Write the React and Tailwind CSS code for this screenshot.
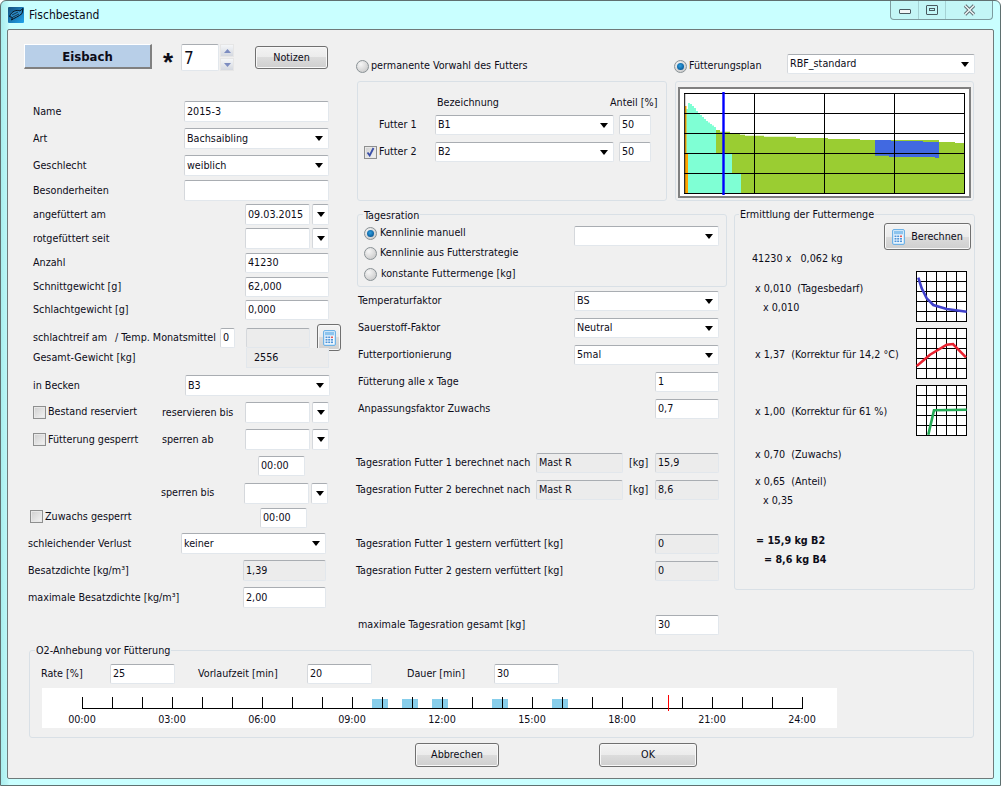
import React from "react";

const Tri = () => (
  <svg width="8" height="5" viewBox="0 0 8 5" className="shrink-0"><path d="M0 0h8L4 5z" fill="#000" /></svg>
);

const fieldCls = "border border-[#e2e7ec] border-t-[#a9adb2] border-l-[#d5d8dc] rounded-[2px] flex items-center pl-[2px] overflow-hidden whitespace-nowrap shrink-0";

const Input = ({ className = "", children }) => (
  <div className={`${fieldCls} bg-white ${className}`}>{children}</div>
);
const Ro = ({ className = "", children }) => (
  <div className={`${fieldCls} bg-[#ececec] ${className}`}>{children}</div>
);
const Select = ({ className = "", children }) => (
  <div className={`${fieldCls} bg-white justify-between pr-[5px] ${className}`}>
    <span>{children}</span>
    <Tri />
  </div>
);
const DateBox = ({ children }) => (
  <div className="flex gap-[2px] shrink-0">
    <Input className="w-[65px] h-[21px]">{children}</Input>
    <div className={`${fieldCls} bg-white w-[17px] h-[21px] justify-center !pl-0`}><Tri /></div>
  </div>
);

const Radio = ({ on }) => (
  <span className="relative w-[13px] h-[13px] rounded-full border border-[#8a9296] bg-[radial-gradient(circle_at_35%_30%,#f6f6f6,#c2c2c2)] shrink-0 flex items-center justify-center">
    {on && <span className="w-[7px] h-[7px] rounded-full bg-[radial-gradient(circle_at_45%_40%,#2f9fe0,#0a5a98_75%,#07406f)]" />}
  </span>
);

const Check = ({ on }) => (
  <span className="w-[13px] h-[13px] border border-[#8e8f8f] bg-[linear-gradient(135deg,#cfcfcf,#f4f4f4)] shadow-[inset_0_0_0_1px_#e8e8e8] shrink-0 flex items-center justify-center">
    {on && (
      <svg width="9" height="10" viewBox="0 0 9 10"><path d="M1.5 5.5 L3.7 8.5 L7.5 1" fill="none" stroke="#3a4fa8" strokeWidth="1.8" /></svg>
    )}
  </span>
);

const winBtn = "rounded-[3px] border border-[#707070] bg-[linear-gradient(#f3f3f3_0%,#ebebeb_50%,#dcdcdc_50%,#cfcfcf_100%)] shadow-[inset_0_0_0_1px_#f8f8f8] flex items-center justify-center shrink-0";

const Calc = () => (
  <svg width="13" height="16" viewBox="0 0 13 16" className="shrink-0">
    <rect x="0.5" y="0.5" width="12" height="15" rx="1.5" fill="#cfe6f8" stroke="#6fb2e6" />
    <rect x="2" y="2" width="9" height="3" fill="#8cc4ee" />
    <rect x="2" y="6" width="9" height="8" fill="#f4faff" />
    {[6.5, 9, 11.5].map((y) =>
      [2.5, 5.2, 8].map((x) => (
        <rect key={`${x}-${y}`} x={x} y={y} width="2" height="1.6" fill={x > 7 && y < 7 ? "#e05a5a" : "#4f94d8"} />
      ))
    )}
  </svg>
);

const Group = ({ className = "", title, titleCls = "", children }) => (
  <div className={`relative border border-[#d9e0e6] rounded-[3px] shrink-0 ${className}`}>
    {title && (
      <span className={`absolute bg-[#f0f0f0] px-[1px] leading-[14px] ${titleCls}`}>{title}</span>
    )}
    {children}
  </div>
);

const Row = ({ className = "", children }) => (
  <div className={`flex items-center whitespace-nowrap ${className}`}>{children}</div>
);

const MiniChart = ({ points, color }) => (
  <svg width="51" height="51" viewBox="0 0 51 51" className="block bg-white">
    {[0.5, 10.5, 20.5, 30.5, 40.5, 50.5].map((p) => (
      <g key={p}>
        <line x1={p} y1="0" x2={p} y2="51" stroke="#000" strokeWidth="1" />
        <line x1="0" y1={p} x2="51" y2={p} stroke="#000" strokeWidth="1" />
      </g>
    ))}
    <polyline points={points} fill="none" stroke={color} strokeWidth="2.6" />
  </svg>
);

const aquaTop = [
  [688, 103], [690, 104], [692, 106], [694, 108], [696, 111], [698, 113], [700, 115], [702, 117], [704, 119],
  [706, 121], [708, 122.5], [710, 124], [712, 125.5], [714, 127],
];
const aquaPath =
  "M686 193 V109 H688 " +
  aquaTop.map(([x, y], i) => `V${y} H${i < aquaTop.length - 1 ? aquaTop[i + 1][0] : 716}`).join(" ") +
  " V153 H732 V173 H741 V193 Z";

const MainChart = () => (
  <svg width="289" height="107" viewBox="680 89 289 107" className="block">
    <path d="M716 193 V130 H720 V131.7 H730 V133 H740 V134.7 H745 V135.7 H764 V136.7 H796 V138 H828 V139 H860 V140 H939 V142 H955 V143 H965 V193 Z" fill="#9acd32" />
    <path d={aquaPath} fill="#7fffd4" />
    <path d="M685 193 V106 H686.5 V154 H688 V193 Z" fill="#ffa500" />
    <path d="M875 140 H891 V141 H923 V142 H939 V158 H935 V157 H889 V155.7 H875 Z" fill="#4169e1" />
    {[684.7, 754.5, 824.5, 894.5, 964.5].map((x) => (
      <line key={x} x1={x} y1="93" x2={x} y2="194" stroke="#000" strokeWidth="1" />
    ))}
    {[93.5, 113.5, 133.5, 153.5, 173.5, 193.5].map((y) => (
      <line key={y} x1="684" y1={y} x2="965" y2={y} stroke="#000" strokeWidth="1" />
    ))}
    <line x1="723.5" y1="92" x2="723.5" y2="195" stroke="#0000ff" strokeWidth="2.4" />
  </svg>
);

const Timeline = () => {
  const ticks = Array.from({ length: 25 }, (_, i) => 40.5 + i * 30);
  return (
    <div className="w-[795px] h-[40px] bg-white ml-[12px] mt-[4px] overflow-hidden">
      <svg width="795" height="25" viewBox="0 0 795 25" className="block">
        {[330, 360, 390, 450, 510].map((x) => (
          <rect key={x} x={x} y="11" width="16" height="9" fill="#87ceeb" />
        ))}
        <line x1="40" y1="20.5" x2="761" y2="20.5" stroke="#000" />
        {ticks.map((x) => (
          <line key={x} x1={x} y1="9" x2={x} y2="20" stroke="#000" />
        ))}
        <line x1="626.5" y1="7" x2="626.5" y2="23" stroke="#ff0000" />
      </svg>
      <div className="flex -ml-[5px]">
        {["00:00", "03:00", "06:00", "09:00", "12:00", "15:00", "18:00", "21:00", "24:00"].map((t) => (
          <span key={t} className="w-[90px] text-center leading-[14px] shrink-0">{t}</span>
        ))}
      </div>
    </div>
  );
};

const LeftColumn = () => (
  <div className="w-[332px] shrink-0 pt-[14px]">
    <div className="flex items-start">
      <div className="w-[128px] h-[25px] pt-[1px] bg-[#b8cfe8] border border-[#ffffff] border-r-[#808080] border-b-[#808080] border-r-2 border-b-2 flex items-center justify-center font-bold text-[13px] shrink-0">Eisbach</div>
      <span className="w-[29px] pl-[11px] h-[27px] text-[26px] leading-[36px] font-bold font-['Liberation_Sans',sans-serif] shrink-0">*</span>
      <Input className="w-[38px] h-[27px] text-[17px]">7</Input>
      <div className="ml-[1px] w-[14px] flex flex-col gap-[1px] shrink-0">
        <div className="h-[13px] bg-[linear-gradient(#f4f6f8,#d4d8e0)] border border-[#e6e6e6] flex items-center justify-center">
          <svg width="7" height="4" viewBox="0 0 7 4"><path d="M0 4h7L3.5 0z" fill="#7c8cc0" /></svg>
        </div>
        <div className="h-[13px] bg-[linear-gradient(#f4f6f8,#d4d8e0)] border border-[#e6e6e6] flex items-center justify-center">
          <svg width="7" height="4" viewBox="0 0 7 4"><path d="M0 0h7L3.5 4z" fill="#7c8cc0" /></svg>
        </div>
      </div>
      <div className={`${winBtn} w-[73px] h-[23px] ml-[21px] mt-[2px]`}>Notizen</div>
    </div>

    <Row className="h-[21px] mt-[30px]"><span className="w-[160px] pl-[9px]">Name</span><Input className="w-[145px] h-[21px]">2015-3</Input></Row>
    <Row className="h-[21px] mt-[6px]"><span className="w-[160px] pl-[9px]">Art</span><Select className="w-[145px] h-[21px]">Bachsaibling</Select></Row>
    <Row className="h-[21px] mt-[6px]"><span className="w-[160px] pl-[9px]">Geschlecht</span><Select className="w-[145px] h-[21px]">weiblich</Select></Row>
    <Row className="h-[21px] mt-[4px]"><span className="w-[160px] pl-[9px]">Besonderheiten</span><Input className="w-[145px] h-[21px]" /></Row>
    <Row className="h-[21px] mt-[3px]"><span className="w-[221px] pl-[9px]">angefüttert am</span><DateBox>09.03.2015</DateBox></Row>
    <Row className="h-[21px] mt-[3px]"><span className="w-[221px] pl-[9px]">rotgefüttert seit</span><DateBox /></Row>
    <Row className="h-[20px] mt-[4px]"><span className="w-[221px] pl-[9px]">Anzahl</span><Input className="w-[84px] h-[20px]">41230</Input></Row>
    <Row className="h-[20px] mt-[4px]"><span className="w-[221px] pl-[9px]">Schnittgewicht [g]</span><Input className="w-[84px] h-[20px]">62,000</Input></Row>
    <Row className="h-[20px] mt-[3px]"><span className="w-[221px] pl-[9px]">Schlachtgewicht [g]</span><Input className="w-[84px] h-[20px]">0,000</Input></Row>
    <Row className="h-[27px] mt-[4px]">
      <span className="w-[91px] pl-[9px]">schlachtreif am</span>
      <span className="w-[105px]">/ Temp. Monatsmittel</span>
      <Input className="w-[15px] h-[20px]">0</Input>
      <Ro className="w-[64px] h-[20px] ml-[11px]" />
      <div className={`${winBtn} w-[24px] h-[27px] ml-[7px]`}><Calc /></div>
    </Row>
    <Row className="h-[20px] -mt-[3px]"><span className="w-[222px] pl-[9px]">Gesamt-Gewicht [kg]</span><div className="w-[83px] h-[20px] bg-[#ececec] border border-t-0 border-[#e2e7ec] pl-[7px] flex items-center">2556</div></Row>
    <Row className="h-[21px] mt-[7px]"><span className="w-[161px] pl-[9px]">in Becken</span><Select className="w-[145px] h-[21px]">B3</Select></Row>
    <Row className="h-[21px] mt-[6px]">
      <span className="w-[138px] pl-[9px] flex items-center gap-[2px] mb-[1px]"><Check />Bestand reserviert</span>
      <span className="w-[83px]">reservieren bis</span>
      <DateBox />
    </Row>
    <Row className="h-[21px] mt-[6px]">
      <span className="w-[138px] pl-[9px] flex items-center gap-[2px]"><Check />Fütterung gesperrt</span>
      <span className="w-[83px]">sperren ab</span>
      <DateBox />
    </Row>
    <Row className="h-[20px] mt-[6px] pl-[234px]"><Input className="w-[47px] h-[20px]">00:00</Input></Row>
    <Row className="h-[20px] mt-[7px] pl-[137px]"><span className="w-[83px]">sperren bis</span><DateBox /></Row>
    <Row className="h-[20px] mt-[5px]">
      <span className="w-[236px] pl-[6px] flex items-center gap-[2px] mb-[3px]"><Check />Zuwachs gesperrt</span>
      <Input className="w-[47px] h-[20px]">00:00</Input>
    </Row>
    <Row className="h-[21px] mt-[5px]"><span className="w-[157px] pl-[4px]">schleichender Verlust</span><Select className="w-[145px] h-[21px]">keiner</Select></Row>
    <Row className="h-[21px] mt-[6px]"><span className="w-[219px] pl-[4px]">Besatzdichte [kg/m³]</span><Ro className="w-[83px] h-[21px]">1,39</Ro></Row>
    <Row className="h-[21px] mt-[6px]"><span className="w-[219px] pl-[4px]">maximale Besatzdichte [kg/m³]</span><Input className="w-[83px] h-[21px]">2,00</Input></Row>
  </div>
);

const FutterGroup = () => (
  <div className="w-[319px] shrink-0">
    <Row className="h-[20px] pt-[4px] gap-[2px]"><Radio />permanente Vorwahl des Futters</Row>
    <Group className="ml-[1px] w-[310px] h-[120px] mt-[7px]">
      <Row className="h-[16px] mt-[13px] pl-[79px]"><span className="w-[173px]">Bezeichnung</span><span>Anteil [%]</span></Row>
      <Row className="h-[20px] mt-[4px] pl-[6px]">
        <span className="w-[13px]" /><span className="ml-[2px] w-[56px]">Futter 1</span>
        <Select className="w-[179px] h-[20px]">B1</Select>
        <Input className="w-[32px] h-[20px] ml-[5px]">50</Input>
      </Row>
      <Row className="h-[20px] mt-[7px] pl-[6px]">
        <Check on /><span className="ml-[2px] w-[56px]">Futter 2</span>
        <Select className="w-[179px] h-[20px]">B2</Select>
        <Input className="w-[32px] h-[20px] ml-[5px]">50</Input>
      </Row>
    </Group>
  </div>
);

const PlanGroup = () => (
  <div className="w-[300px] shrink-0">
    <div className="flex items-start h-[20px]">
      <Row className="w-[113px] -ml-[1px] pt-[4px] h-[20px] gap-[2px]"><Radio on />Fütterungsplan</Row>
      <Select className="w-[188px] h-[20px]">RBF_standard</Select>
    </div>
    <Group className="w-[299px] h-[120px] mt-[7px] pl-[2px] pt-[5px]">
      <div className="w-[293px] h-[111px] border-2 border-[#808080] bg-white"><MainChart /></div>
    </Group>
  </div>
);

const MiddleForm = () => (
  <div className="w-[378px] shrink-0 pt-[2px]">
    <Group className="ml-[1px] w-[370px] h-[73px] flex" title="Tagesration" titleCls="left-[5px] -top-[6px]">
      <div className="w-[216px] pt-[8px] pl-[6px] shrink-0">
        <Row className="h-[20px] gap-[3px]"><Radio on />Kennlinie manuell</Row>
        <Row className="h-[20px] gap-[3px]"><Radio />Kennlinie aus Futterstrategie</Row>
        <Row className="h-[20px] gap-[4px] mt-[1px]"><Radio />konstante Futtermenge [kg]</Row>
      </div>
      <Select className="w-[145px] h-[20px] mt-[11px]" />
    </Group>
    <Row className="h-[20px] mt-[4px] pl-[2px]"><span className="w-[216px]">Temperaturfaktor</span><Select className="w-[145px] h-[20px]">BS</Select></Row>
    <Row className="h-[20px] mt-[7px] pl-[2px]"><span className="w-[216px]">Sauerstoff-Faktor</span><Select className="w-[145px] h-[20px]">Neutral</Select></Row>
    <Row className="h-[20px] mt-[7px] pl-[2px]"><span className="w-[216px]">Futterportionierung</span><Select className="w-[145px] h-[20px]">5mal</Select></Row>
    <Row className="h-[20px] mt-[7px] pl-[2px]"><span className="w-[297px]">Fütterung alle x Tage</span><Input className="w-[64px] h-[20px]">1</Input></Row>
    <Row className="h-[20px] mt-[7px] pl-[2px]"><span className="w-[297px]">Anpassungsfaktor Zuwachs</span><Input className="w-[64px] h-[20px]">0,7</Input></Row>
    <Row className="h-[20px] mt-[34px]">
      <span className="w-[180px]">Tagesration Futter 1 berechnet nach</span>
      <Ro className="w-[87px] h-[20px]">Mast R</Ro>
      <span className="ml-[6px] w-[26px]">[kg]</span>
      <Ro className="w-[64px] h-[20px]">15,9</Ro>
    </Row>
    <Row className="h-[20px] mt-[7px]">
      <span className="w-[180px]">Tagesration Futter 2 berechnet nach</span>
      <Ro className="w-[87px] h-[20px]">Mast R</Ro>
      <span className="ml-[6px] w-[26px]">[kg]</span>
      <Ro className="w-[64px] h-[20px]">8,6</Ro>
    </Row>
    <Row className="h-[20px] mt-[34px]"><span className="w-[299px]">Tagesration Futter 1 gestern verfüttert [kg]</span><Ro className="w-[64px] h-[20px]">0</Ro></Row>
    <Row className="h-[20px] mt-[7px]"><span className="w-[299px]">Tagesration Futter 2 gestern verfüttert [kg]</span><Ro className="w-[64px] h-[20px]">0</Ro></Row>
    <Row className="h-[20px] mt-[34px] pl-[2px]"><span className="w-[297px]">maximale Tagesration gesamt [kg]</span><Input className="w-[64px] h-[20px]">30</Input></Row>
  </div>
);

const Line = ({ className = "", children }) => (
  <div className={`h-[16px] leading-[16px] whitespace-pre ${className}`}>{children}</div>
);

const ErmittlungGroup = () => (
  <Group className="w-[241px] h-[376px] mt-[2px]" title="Ermittlung der Futtermenge" titleCls="left-[4px] -top-[7px]">
    <div className="flex justify-end pr-[3px] pt-[8px]">
      <div className={`${winBtn} w-[87px] h-[27px] gap-[6px]`}><Calc />Berechnen</div>
    </div>
    <div className="flex">
      <div className="w-[181px] shrink-0">
        <Line className="mt-[1px] ml-[17px]">41230 x   0,062 kg</Line>
        <Line className="mt-[14px] ml-[20px]">x 0,010  (Tagesbedarf)</Line>
        <Line className="mt-[3px] ml-[28px]">x 0,010</Line>
        <Line className="mt-[31px] ml-[20px]">x 1,37  (Korrektur für 14,2 °C)</Line>
        <Line className="mt-[41px] ml-[20px]">x 1,00  (Korrektur für 61 %)</Line>
        <Line className="mt-[27px] ml-[20px]">x 0,70  (Zuwachs)</Line>
        <Line className="mt-[11px] ml-[20px]">x 0,65  (Anteil)</Line>
        <Line className="mt-[3px] ml-[28px]">x 0,35</Line>
        <Line className="mt-[24px] ml-[21px] font-bold">= 15,9 kg B2</Line>
        <Line className="mt-[3px] ml-[29px] font-bold">= 8,6 kg B4</Line>
      </div>
      <div className="flex flex-col gap-[6px] mt-[21px]">
        <MiniChart color="#3f3fcb" points="2.3,6.7 5.7,17.3 10.7,27.3 17.3,34 30.7,38 50.7,40.7" />
        <MiniChart color="#e8202e" points="0.7,38 14,26.7 30.7,16.7 37,16 50,29.3" />
        <MiniChart color="#22aa55" points="12.3,49.7 18,25.3 50.7,24.7" />
      </div>
    </div>
  </Group>
);

const O2Group = () => (
  <Group className="ml-[21px] mt-[15px] w-[945px] h-[88px]" title="O2-Anhebung vor Fütterung" titleCls="left-[5px] -top-[7px]">
    <div className="flex items-start pl-[11px] pt-[13px] whitespace-nowrap">
      <span className="w-[69px] mt-[3px]">Rate [%]</span>
      <Input className="w-[65px] h-[20px]">25</Input>
      <span className="w-[109px] ml-[23px] mt-[3px]">Vorlaufzeit [min]</span>
      <Input className="w-[65px] h-[20px]">20</Input>
      <span className="w-[87px] ml-[35px] mt-[3px]">Dauer [min]</span>
      <Input className="w-[65px] h-[20px]">30</Input>
    </div>
    <Timeline />
  </Group>
);

const TitleBar = () => (
  <div className="h-[28px] flex items-start">
    <svg width="16" height="16" viewBox="0 0 16 16" className="ml-[7px] mt-[6px] shrink-0">
      <defs>
        <linearGradient id="ico" x1="0" y1="0" x2="1" y2="1">
          <stop offset="0" stopColor="#14507e" />
          <stop offset="1" stopColor="#22a4ec" />
        </linearGradient>
      </defs>
      <rect width="16" height="16" rx="1" fill="url(#ico)" />
      <path d="M1.5 9.5 C3.5 4 9 2.5 12 4 L15 1.5 L14 6.5 C11 9.5 6 11 3.5 13 L4.5 10.5 Z" fill="#2c8ac6" stroke="#06121c" strokeWidth="1" />
      <path d="M4 8 L10 5 M5 10 L11 7" stroke="#06121c" strokeWidth="0.7" />
    </svg>
    <span className="ml-[5px] mt-[6px] text-[12px] leading-[16px]">Fischbestand</span>
    <div className="ml-auto mr-[7px] -mt-[1px] w-[103px] h-[20px] flex border border-t-0 border-[#7d9c9f] rounded-b-[4px] bg-[#c3f6f6]">
      <div className="w-[28px] flex items-center justify-center border-r border-[#a5d2d4] pt-[4px]">
        <span className="w-[12px] h-[5px] border border-[#4a5a60] bg-[#f2f6f6] rounded-[1px]" />
      </div>
      <div className="w-[27px] flex items-center justify-center border-r border-[#a5d2d4]">
        <span className="w-[12px] h-[10px] border border-[#4a5a60] flex items-center justify-center rounded-[1px]"><span className="w-[6px] h-[3px] border border-[#4a5a60]" /></span>
      </div>
      <div className="flex-1 flex items-center justify-center">
        <svg width="13" height="12" viewBox="0 0 13 12"><path d="M2 1.5 L11 10.5 M11 1.5 L2 10.5" stroke="#5a6a70" strokeWidth="3.4" /><path d="M2 1.5 L11 10.5 M11 1.5 L2 10.5" stroke="#eef4f4" strokeWidth="1.6" /></svg>
      </div>
    </div>
  </div>
);

export default function App() {
  return (
    <div className="w-[1001px] h-[786px] bg-[linear-gradient(90deg,#a8eeee_0px,#c0f8f8_7px,#c9ffff_8px)] border border-[#5f7070] rounded-t-[6px] overflow-hidden text-[10.7px] leading-[14px] text-[#0c0c18] font-['DejaVu_Sans_Condensed','Noto_Sans',sans-serif]">
      <TitleBar />
      <div className="ml-[6px] w-[987px] h-[750px] bg-[#f0f0f0] border border-[#6f7a7a] rounded-[2px]">
        <div className="flex pl-[16px]">
          <LeftColumn />
          <div className="pt-[24px] w-[620px] shrink-0">
            <div className="flex">
              <FutterGroup />
              <PlanGroup />
            </div>
            <div className="flex mt-[11px]">
              <MiddleForm />
              <ErmittlungGroup />
            </div>
          </div>
        </div>
        <O2Group />
        <div className="flex ml-[407px] mt-[5px]">
          <div className={`${winBtn} w-[84px] h-[24px]`}>Abbrechen</div>
          <div className={`${winBtn} w-[98px] h-[24px] ml-[100px]`}>OK</div>
        </div>
      </div>
    </div>
  );
}
